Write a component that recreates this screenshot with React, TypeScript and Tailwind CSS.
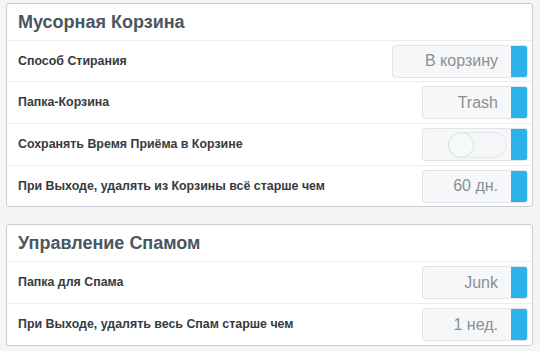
import React from "react";

type Row = {
  label: string;
  value?: string;
  toggle?: boolean;
  wide?: boolean;
  short?: boolean;
};

const trash: Row[] = [
  { label: "Способ Стирания", value: "В корзину", wide: true, short: true },
  { label: "Папка-Корзина", value: "Trash" },
  { label: "Сохранять Время Приёма в Корзине", toggle: true },
  { label: "При Выходе, удалять из Корзины всё старше чем", value: "60 дн.", short: true },
];

const spam: Row[] = [
  { label: "Папка для Спама", value: "Junk" },
  { label: "При Выходе, удалять весь Спам старше чем", value: "1 нед." },
];

function Field({ row }: { row: Row }) {
  return (
    <div className="flex h-[33px] rounded-[3px] border border-[#e1e4e8] bg-[#f6f7f9] overflow-hidden">
      {row.toggle ? (
        <div className="flex w-[88px] items-center justify-end pr-[4px]">
          <div className="relative h-[26px] w-[59px] rounded-full border border-[#e4e7ea] bg-[#f4f6f8]">
            <div className="absolute left-[-1px] top-[-1px] h-[26px] w-[26px] rounded-full border border-[#d6e4d6] bg-[#f8faf8]" />
          </div>
        </div>
      ) : (
        <div
          className={`flex items-center justify-end pr-[13px] text-[16px] text-[#8a8f94] ${
            row.wide ? "w-[118px]" : "w-[88px]"
          }`}
        >
          {row.value}
        </div>
      )}
      <div className="w-[16px] bg-[#2cb1ea]" />
    </div>
  );
}

function Panel({ title, rows }: { title: string; rows: Row[] }) {
  return (
    <div className="mx-[6px] w-[527px] rounded-[3px] border border-[#c9ced3] bg-white">
      <div className="flex h-[36px] items-center pl-[11px] text-[18px] font-semibold text-[#4a5560]">
        {title}
      </div>
      {rows.map((r, i) => (
        <div
          key={i}
          className={`flex items-center justify-between border-t border-[#eceef0] pl-[11px] pr-[4px] ${
            r.short ? "h-[41px]" : "h-[42px]"
          }`}
        >
          <span className="text-[12.4px] font-bold text-[#363b40]">{r.label}</span>
          <Field row={r} />
        </div>
      ))}
    </div>
  );
}

export default function App() {
  return (
    <div
      className="h-[351px] w-[540px] bg-[#f4f5f6] pt-[3px]"
      style={{ fontFamily: '"Liberation Sans", Arial, sans-serif' }}
    >
      <Panel title="Мусорная Корзина" rows={trash} />
      <div className="h-[17px]" />
      <Panel title="Управление Спамом" rows={spam} />
    </div>
  );
}
